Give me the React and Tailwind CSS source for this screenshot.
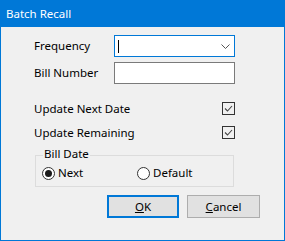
import React from "react";

const font = { fontFamily: '"Noto Sans", "Open Sans", sans-serif' };

function Check() {
    return (<div className="w-[13px] h-[13px] border border-[#333333] bg-[#f0f0f0] flex items-center justify-center">
        <svg width="11" height="11" viewBox="0 0 11 11">
            <path d="M2 5.5 L4.5 8 L9 3" fill="none" stroke="#444444" strokeWidth="1.1"/>
        </svg>
    </div>);
}

function Radio({ checked, label }) {
    return (<div className="flex items-center gap-[3px]">
        <div className="w-[13px] h-[13px] rounded-full border border-[#333333] bg-white flex items-center justify-center">
            {checked && <div className="w-[7px] h-[7px] rounded-full bg-[#1a1a1a]"/>}
        </div>
        <span>{label}</span>
    </div>);
}

export default function App() {
    return (<div className="w-[285px] h-[241px] bg-[#0078d7] p-[1px] pt-0 flex flex-col text-[11.5px] text-black leading-none" style={font}>
        <div className="h-[27px] flex items-center pl-[5px] text-white text-[11.5px]">Batch Recall</div>
        <div className="flex-1 bg-[#f0f0f0] relative pl-[33px]">
            <div className="flex items-center mt-[8px] h-[22px]">
                <span className="w-[80px]">Frequency</span>
                <div className="w-[121px] h-[22px] border border-[#0078d7] bg-white flex items-center justify-between pl-[3px] pr-[4px]">
                    <div className="w-[1px] h-[13px] bg-black"/>
                    <svg width="9" height="5" viewBox="0 0 9 5">
                        <path d="M0.5 0.5 L4.5 4.5 L8.5 0.5" fill="none" stroke="#555555" strokeWidth="1"/>
                    </svg>
                </div>
            </div>
            <div className="flex items-center mt-[5px] h-[22px]">
                <span className="w-[80px]">Bill Number</span>
                <div className="w-[121px] h-[22px] border border-[#7a7a7a] bg-white"/>
            </div>
            <div className="flex items-center justify-between w-[201px] mt-[18px] h-[13px]">
                <span>Update Next Date</span>
                <Check />
            </div>
            <div className="flex items-center justify-between w-[201px] mt-[11px] h-[13px]">
                <span>Update Remaining</span>
                <Check />
            </div>
            <div className="relative w-[199px] h-[32px] mt-[16px] ml-[1px] border border-[#dcdcdc]">
                <span className="absolute -top-[8px] left-[7px] px-[1px] bg-[#f0f0f0]">Bill Date</span>
                <div className="flex items-center h-full pt-[4px] pl-[6px]">
                    <div className="w-[95px]"><Radio checked label="Next"/></div>
                    <Radio label="Default"/>
                </div>
            </div>
            <div className="flex gap-[8px] mt-[8px] ml-[73px]">
                <button className="w-[72px] h-[23px] border-2 border-[#0078d7] bg-[#e1e1e1]"><span className="underline">O</span>K</button>
                <button className="w-[73px] h-[23px] border border-[#adadad] bg-[#e1e1e1]"><span className="underline">C</span>ancel</button>
            </div>
        </div>
    </div>);
}
